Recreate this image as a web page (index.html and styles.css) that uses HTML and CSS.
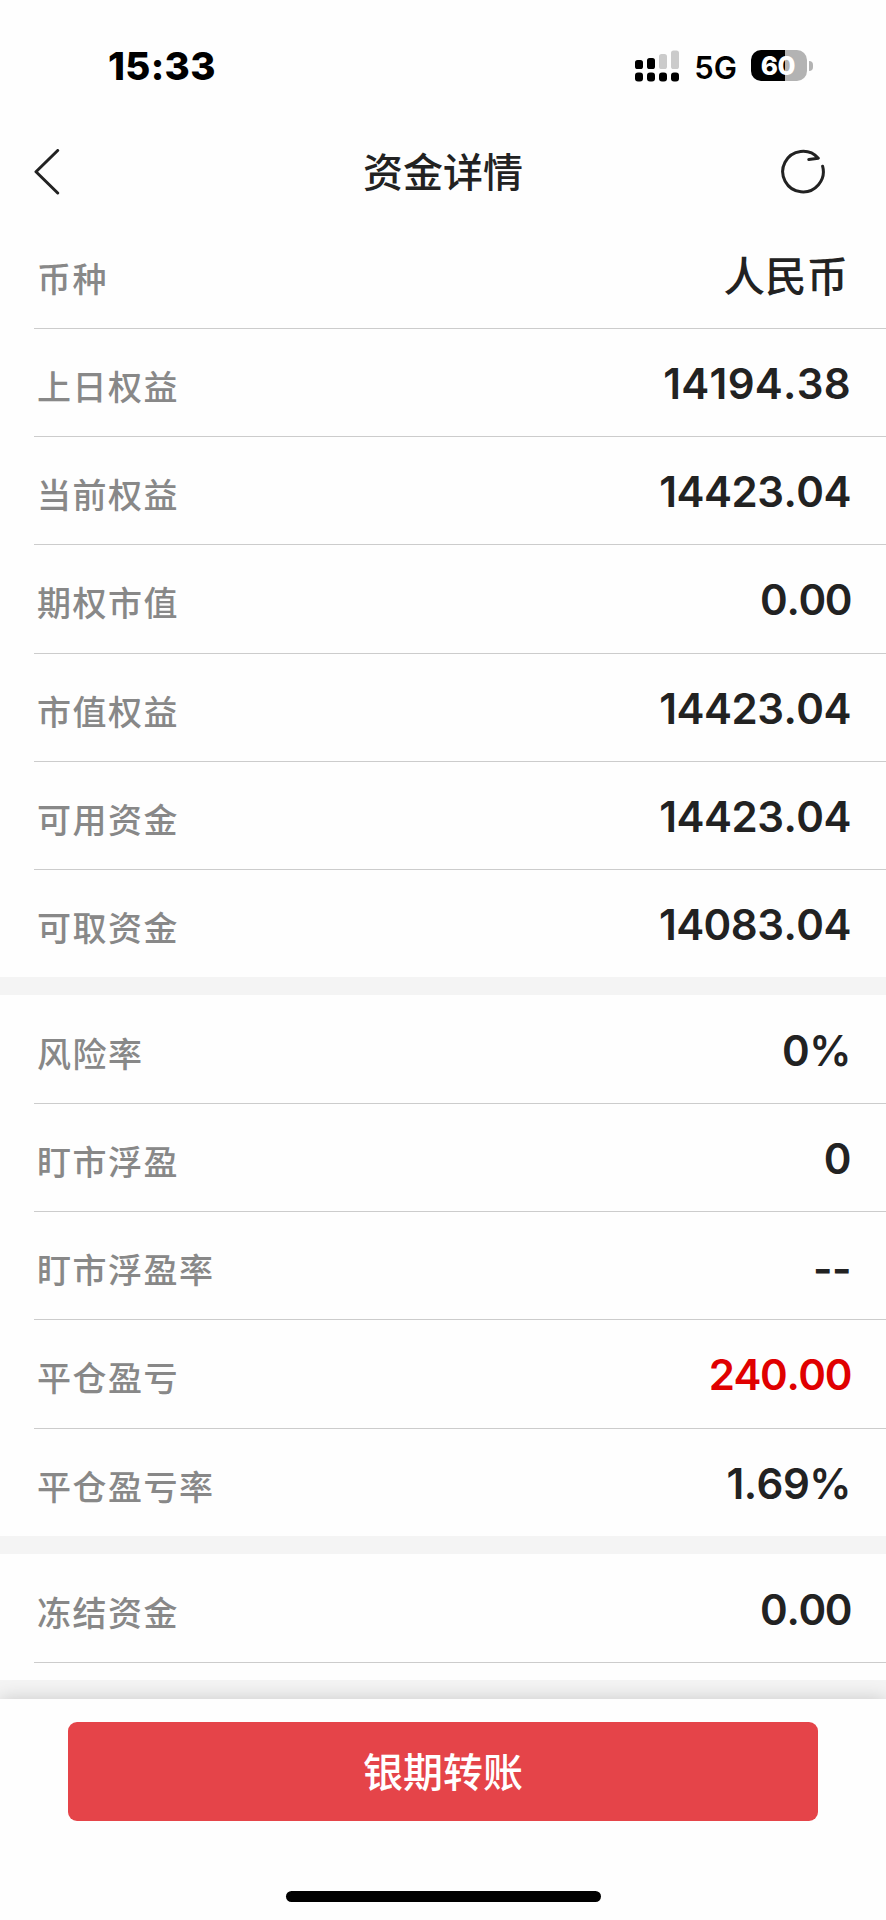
FILE: index.html
```html
<!DOCTYPE html>
<html lang="zh-CN">
<head>
<meta charset="utf-8">
<title>资金详情</title>
<link rel="stylesheet" href="styles.css">
</head>
<body>
<div class="screen">
  <header class="status">
    <span class="time">15:33</span>
    <div class="indicators">
      <svg class="signal" width="45" height="32" viewBox="0 0 45 32">
        <g fill="#000"><rect x="0" y="22.5" width="8" height="9" rx="3"/><rect x="12" y="22.5" width="8" height="9" rx="3"/><rect x="24" y="22.5" width="8" height="9" rx="3"/><rect x="36" y="22.5" width="8" height="9" rx="3"/><rect x="0" y="10" width="8" height="9" rx="2.6"/><rect x="12" y="8" width="8" height="11" rx="2.6"/></g>
        <g fill="#cbcbcb"><rect x="24" y="4" width="8" height="15" rx="2.6"/><rect x="36" y="0.500" width="8" height="18.500" rx="2.6"/></g>
      </svg>
      <span class="network">5G</span>
      <div class="battery"><span class="level">60</span><i class="cap"></i></div>
    </div>
  </header>
  <nav class="nav">
    <svg class="back" width="28" height="48" viewBox="0 0 28 48"><path d="M23.700 1.500 2 22.700 23.700 44" fill="none" stroke="#222" stroke-width="3" stroke-linecap="round" stroke-linejoin="round"/></svg>
    <h1 class="title">资金详情</h1>
    <svg class="refresh" width="46" height="46" viewBox="0 0 46 46"><path d="M42.600 17.200A20.300 20.300 0 1 1 38.300 9.200L28.800 10.500" fill="none" stroke="#222" stroke-width="3" stroke-linecap="round" stroke-linejoin="round"/></svg>
  </nav>
  <main class="content">
    <section class="group">
      <div class="row"><span class="label">币种</span><span class="value cjk">人民币</span></div>
      <div class="row"><span class="label">上日权益</span><span class="value loose">14194.38</span></div>
      <div class="row"><span class="label">当前权益</span><span class="value">14423.04</span></div>
      <div class="row"><span class="label">期权市值</span><span class="value tight">0.00</span></div>
      <div class="row"><span class="label">市值权益</span><span class="value">14423.04</span></div>
      <div class="row"><span class="label">可用资金</span><span class="value">14423.04</span></div>
      <div class="row"><span class="label">可取资金</span><span class="value">14083.04</span></div>
    </section>
    <section class="group">
      <div class="row"><span class="label">风险率</span><span class="value">0%</span></div>
      <div class="row"><span class="label">盯市浮盈</span><span class="value">0</span></div>
      <div class="row"><span class="label">盯市浮盈率</span><span class="value empty">--</span></div>
      <div class="row"><span class="label">平仓盈亏</span><span class="value tight gain">240.00</span></div>
      <div class="row"><span class="label">平仓盈亏率</span><span class="value">1.69%</span></div>
    </section>
    <section class="group">
      <div class="row"><span class="label">冻结资金</span><span class="value tight">0.00</span></div>
      <div class="row-end"></div>
    </section>
  </main>
  <footer class="footer">
    <button class="transfer">银期转账</button>
    <div class="home"></div>
  </footer>
</div>
</body>
</html>
```

FILE: styles.css
```css
* { box-sizing: border-box; }
body { margin: 0; background: #fff; }
.screen {
  width: 886px; height: 1920px; overflow: hidden;
  display: flex; flex-direction: column;
  background: #fefefe; color: #222;
  font-family: Inter, "Noto Sans CJK SC", sans-serif;
}
.status {
  height: 124px; padding: 50px 73px 0 108px;
  display: flex; justify-content: space-between; align-items: flex-start;
  color: #000;
}
.time { font-size: 38.5px; line-height: 33px; font-weight: 800; letter-spacing: .3px; }
.indicators { display: flex; align-items: flex-start; }
.network { margin: 0 14px 0 14px; font-size: 31px; line-height: 35px; font-weight: 600; }
.battery { display: flex; align-items: center; gap: 2px; height: 31px; }
.level {
  width: 56px; height: 31px; border-radius: 10px; text-align: center;
  font-size: 26px; line-height: 32px; font-weight: 800; color: #fff;
  letter-spacing: -.4px; padding-right: 2px;
  background: linear-gradient(to right, #000 60%, #b3b3b3 60%);
}
.cap { width: 4px; height: 10px; border-radius: 0 5px 5px 0; background: #b3b3b3; }
.nav {
  height: 96px; padding: 0 60px 0 34px;
  display: grid; grid-template-columns: 92px 1fr 66px; align-items: center;
}
.title { margin: 0; padding-top: 1px; text-align: center; font-size: 40px; line-height: 96px; font-weight: 500; }
.refresh { justify-self: end; margin-bottom: 2px; }
.content { height: 1479px; overflow: hidden; background: #f4f4f4; }
.group { margin-bottom: 18px; padding-left: 34px; background: #fefefe; }
.row {
  height: 108.15px; padding: 0 35px 0 3px;
  display: flex; justify-content: space-between;
  border-top: 1px solid #ccc;
}
.row:first-child { border-top-color: transparent; }
.row-end { height: 18px; border-top: 1px solid #ccc; }
.label { font-size: 34px; line-height: 117px; letter-spacing: 1.5px; font-weight: 500; color: #888; }
.value {
  font-size: 42px; line-height: 110px; font-weight: 600;
  font-kerning: none; letter-spacing: -.5px;
}
.loose { letter-spacing: .3px; }
.tight { letter-spacing: -1.4px; }
.empty { line-height: 114px; }
.cjk { font-size: 41.5px; line-height: 113px; font-weight: 500; letter-spacing: 0; padding-right: 3px; }
.gain { color: #e00000; }
.footer {
  position: relative; flex: 1; padding: 23px 68px 0;
  display: flex; flex-direction: column; align-items: center;
  background: #fefefe; box-shadow: 0 0 18px rgba(0, 0, 0, .18);
}
.transfer {
  width: 750px; height: 98.500px; border: 0; border-radius: 9px; padding: 0 0 2px;
  background: #e54449; color: #fff;
  font-family: "Noto Sans CJK SC", sans-serif; font-size: 40px; font-weight: 500;
}
.home { width: 315px; height: 11px; margin-top: 70px; border-radius: 6px; background: #000; }
```
